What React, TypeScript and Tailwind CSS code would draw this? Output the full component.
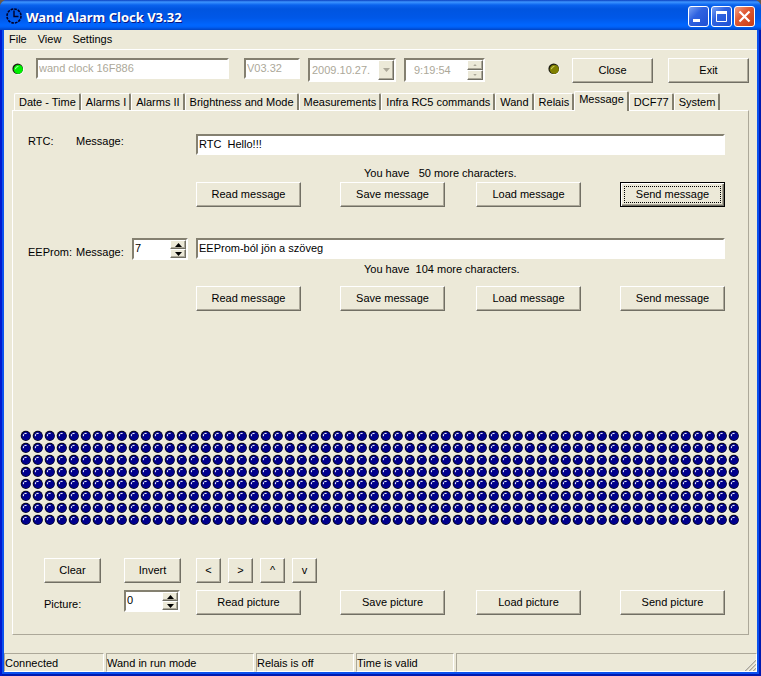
import { useState } from "react";
import clsx from "clsx";

const COLS = 60;
const ROWS = 8;

const TABS = [
  "Date - Time",
  "Alarms I",
  "Alarms II",
  "Brightness and Mode",
  "Measurements",
  "Infra RC5 commands",
  "Wand",
  "Relais",
  "Message",
  "DCF77",
  "System",
];

const SUNKEN =
  "border-2 border-t-[#848070] border-l-[#848070] border-r-white border-b-white bg-white";
const RAISED =
  "border border-t-white border-l-white border-r-[#716f64] border-b-[#716f64] bg-[#ece9d8] shadow-[inset_-1px_-1px_0_#aca899]";

type ButtonProps = {
  children: string;
  className?: string;
  focused?: boolean;
  onClick?: () => void;
};

function Button({ children, className, focused, onClick }: ButtonProps) {
  if (focused) {
    return (
      <button
        type="button"
        onClick={onClick}
        className={clsx(
          "h-[25px] border border-black bg-[#ece9d8] p-[3px] shadow-[inset_1px_1px_0_#fff,inset_-1px_-1px_0_#716f64,inset_-2px_-2px_0_#aca899]",
          className
        )}
      >
        <span className="flex h-full items-center justify-center border border-dotted border-black">
          {children}
        </span>
      </button>
    );
  }
  return (
    <button
      type="button"
      onClick={onClick}
      className={clsx("h-[25px] text-center", RAISED, className)}
    >
      {children}
    </button>
  );
}

function SpinButtons({ disabled, onStep }: { disabled?: boolean; onStep?: (d: number) => void }) {
  return (
    <div className="flex w-4 shrink-0 flex-col">
      {[1, -1].map((dir) => (
        <button
          key={dir}
          type="button"
          disabled={disabled}
          aria-label={dir > 0 ? "Up" : "Down"}
          onClick={() => onStep?.(dir)}
          className={clsx("flex min-h-0 flex-1 items-center justify-center", RAISED)}
        >
          <svg
            viewBox="0 0 7 4"
            className={disabled ? "h-[2px] w-1 fill-[#aca899]" : "h-1 w-[7px] fill-black"}
          >
            <path d={dir > 0 ? "M3.5 0L7 4H0z" : "M0 0h7L3.5 4z"} />
          </svg>
        </button>
      ))}
    </div>
  );
}

function SpinEdit({ label, initial }: { label: string; initial: number }) {
  const [value, setValue] = useState(initial);
  return (
    <div className={clsx("flex h-[22px] w-14", SUNKEN)}>
      <input
        aria-label={label}
        value={value}
        onChange={(e) => setValue(Number(e.target.value) || 0)}
        className="w-0 min-w-0 flex-1 px-px pb-0.5 outline-none"
      />
      <SpinButtons onStep={(d) => setValue((v) => Math.max(0, v + d))} />
    </div>
  );
}

function StatusLed({ color, light }: { color: string; light: string }) {
  return (
    <svg viewBox="0 0 12 12" className="h-3 w-3 shrink-0">
      <circle cx="6.4" cy="6.4" r="5.4" fill="#fff" />
      <circle cx="5.7" cy="5.7" r="5.3" fill="#1c1c10" />
      <circle cx="6.3" cy="6.3" r="4.6" fill={color} />
      <path d="M3.4 6.2Q3.6 3.6 6.4 3.4" stroke={light} strokeWidth="1" fill="none" />
    </svg>
  );
}

function Dot({ on }: { on: boolean }) {
  return (
    <svg viewBox="0 0 12 12" className="h-3 w-3">
      <circle cx="6.4" cy="6.4" r="5.5" fill="#f8f6ee" />
      <circle cx="5.8" cy="5.8" r="5.1" fill="#08081c" />
      <circle cx="6" cy="6" r="4.3" fill={on ? "#3c6cff" : "#00008c"} />
      <path d="M3.4 6.2V4.8L4.8 3.4H6.6" stroke="#fff" strokeWidth="1" fill="none" />
    </svg>
  );
}

function TitleBar() {
  const caption =
    "flex h-[21px] w-[21px] items-center justify-center rounded-[3px] border border-white";
  return (
    <header className="flex h-[30px] items-center rounded-t-[7px] bg-[linear-gradient(#0a3fc0_0px,#3d95ff_2px,#0a63ee_5px,#0055e0_9px,#0058e8_18px,#0066ff_25px,#0061f8_27px,#0044c4_30px)] pt-0.5 pr-1.5 pl-1.5">
      <svg viewBox="0 0 16 16" className="h-4 w-4">
        <circle
          cx="8"
          cy="8"
          r="7"
          fill="none"
          stroke="#000028"
          strokeWidth="1.6"
          strokeDasharray="2.7 0.965"
        />
        <path d="M8 2.5V8.5h4.5" fill="none" stroke="#000028" strokeWidth="1.4" />
      </svg>
      <h1 className="ml-1 flex-1 pt-0.5 font-['Noto_Sans','Open_Sans',sans-serif] text-[13px] leading-4 font-bold text-white [text-shadow:1px_1px_0_#0a1883]">
        Wand Alarm Clock V3.32
      </h1>
      <div className="flex gap-0.5">
        <button
          type="button"
          aria-label="Minimize"
          className={clsx(caption, "bg-[linear-gradient(135deg,#7aa2f4,#2f62e0_40%,#1e4fd4)]")}
        >
          <svg viewBox="0 0 19 19" className="h-[19px] w-[19px]">
            <path d="M4 12h7v3H4z" fill="#fff" />
          </svg>
        </button>
        <button
          type="button"
          aria-label="Maximize"
          className={clsx(caption, "bg-[linear-gradient(135deg,#7aa2f4,#2f62e0_40%,#1e4fd4)]")}
        >
          <svg viewBox="0 0 19 19" className="h-[19px] w-[19px]">
            <path d="M4.5 5v9.5h10V5" fill="none" stroke="#fff" />
            <path d="M4 4h11v3H4z" fill="#fff" />
          </svg>
        </button>
        <button
          type="button"
          aria-label="Close window"
          className={clsx(caption, "bg-[linear-gradient(135deg,#f0a088,#e05a34_40%,#c83c14)]")}
        >
          <svg viewBox="0 0 19 19" className="h-[19px] w-[19px]">
            <path d="M4.5 4.5l10 10M14.5 4.5l-10 10" stroke="#fff" strokeWidth="2.2" />
          </svg>
        </button>
      </div>
    </header>
  );
}

function DeviceBar() {
  const field = "h-[21px] px-px pb-0.5 text-[#aca899] disabled:opacity-100";
  return (
    <div className="flex items-start px-2 pt-2">
      <div className="flex h-[22px] w-6 items-center">
        <StatusLed color="#00f000" light="#b8ffb8" />
      </div>
      <div className="flex flex-1">
        <input
          aria-label="Device"
          disabled
          defaultValue="wand clock 16F886"
          className={clsx("mr-[15px] w-[193px]", field, SUNKEN)}
        />
        <input
          aria-label="Version"
          disabled
          defaultValue="V03.32"
          className={clsx("mr-2 w-14", field, SUNKEN)}
        />
        <div className={clsx("relative mr-2 h-6 w-[88px]", SUNKEN)}>
          <select
            aria-label="Date"
            disabled
            className="h-full w-full appearance-none px-0.5 text-[#aca899] disabled:opacity-100"
          >
            <option>2009.10.27.</option>
          </select>
          <span
            className={clsx(
              "pointer-events-none absolute inset-y-0 right-0 flex w-4 items-center justify-center",
              RAISED
            )}
          >
            <svg viewBox="0 0 7 4" className="h-1 w-[7px] fill-[#aca899]">
              <path d="M0 0h7L3.5 4z" />
            </svg>
          </span>
        </div>
        <div className={clsx("flex h-6 w-[81px]", SUNKEN)}>
          <input
            aria-label="Time"
            disabled
            defaultValue="9:19:54"
            className="w-0 min-w-0 flex-1 pl-2 text-[#aca899]"
          />
          <SpinButtons disabled />
        </div>
      </div>
      <div className="flex h-[22px] w-6 items-center">
        <StatusLed color="#808000" light="#d8d870" />
      </div>
      <div className="flex gap-[15px]">
        <Button className="w-[81px]">Close</Button>
        <Button className="w-[81px]">Exit</Button>
      </div>
    </div>
  );
}

function ActionRow({ noun, focusSend }: { noun: string; focusSend?: boolean }) {
  return (
    <div className="grid flex-1 grid-cols-[144fr_136fr_144fr_105px]">
      <Button className="w-[105px]">{`Read ${noun}`}</Button>
      <Button className="w-[105px]">{`Save ${noun}`}</Button>
      <Button className="w-[105px]">{`Load ${noun}`}</Button>
      <Button className="w-[105px]" focused={focusSend}>
        {`Send ${noun}`}
      </Button>
    </div>
  );
}

function MessagePage() {
  const [dots, setDots] = useState<boolean[]>(() => Array(COLS * ROWS).fill(false));

  // moves the whole picture, wrapping round at the edges
  const shift = (dx: number, dy: number) =>
    setDots((d) =>
      d.map((_, i) => {
        const x = ((i % COLS) - dx + COLS) % COLS;
        const y = (Math.floor(i / COLS) - dy + ROWS) % ROWS;
        return d[y * COLS + x];
      })
    );

  const edit = clsx("h-[21px] min-w-0 flex-1 px-px pb-0.5 whitespace-pre outline-none", SUNKEN);

  return (
    <section className="flex-1 border border-t-white border-l-white border-r-[#aca899] border-b-[#aca899] pt-[23px] pb-[17px]">
      <div className="pr-[23px] pl-[15px]">
        <div className="flex">
          <span className="w-12 pt-px">RTC:</span>
          <label htmlFor="rtc" className="w-[120px] pt-px">
            Message:
          </label>
          <input id="rtc" defaultValue="RTC  Hello!!!" className={edit} />
        </div>
        <p className="mt-3 pl-[336px] whitespace-pre">You have   50 more characters.</p>
        <div className="mt-0.5 flex pl-[168px]">
          <ActionRow noun="message" focusSend />
        </div>

        <div className="mt-[31px] flex">
          <span className="w-12 pt-2">EEProm:</span>
          <label htmlFor="eeprom" className="w-14 pt-2">
            Message:
          </label>
          <div className="mr-2">
            <SpinEdit label="Message number" initial={7} />
          </div>
          <input id="eeprom" defaultValue="EEProm-ból jön a szöveg" className={edit} />
        </div>
        <p className="mt-[3px] pl-[336px] whitespace-pre">You have  104 more characters.</p>
        <div className="mt-[10px] flex pl-[168px]">
          <ActionRow noun="message" />
        </div>
      </div>

      <div className="mt-[119px] grid grid-cols-[repeat(60,1fr)] pr-2 pl-[7px]">
        {dots.map((on, i) => (
          <button
            key={i}
            type="button"
            aria-label={`Dot ${i + 1}`}
            className="h-3"
            onClick={() => setDots((d) => d.map((v, j) => (j === i ? !v : v)))}
          >
            <Dot on={on} />
          </button>
        ))}
      </div>

      <div className="mt-8 pr-[23px] pl-[31px]">
        <div className="flex">
          <Button className="mr-[23px] w-[57px]" onClick={() => setDots((d) => d.map(() => false))}>
            Clear
          </Button>
          <Button className="mr-[15px] w-[57px]" onClick={() => setDots((d) => d.map((v) => !v))}>
            Invert
          </Button>
          <div className="flex gap-[7px]">
            <Button className="w-[25px]" onClick={() => shift(-1, 0)}>{"<"}</Button>
            <Button className="w-[25px]" onClick={() => shift(1, 0)}>{">"}</Button>
            <Button className="w-[25px]" onClick={() => shift(0, -1)}>^</Button>
            <Button className="w-[25px]" onClick={() => shift(0, 1)}>v</Button>
          </div>
        </div>
        <div className="mt-[7px] flex">
          <span className="w-20 pt-2">Picture:</span>
          <div className="mr-4">
            <SpinEdit label="Picture number" initial={0} />
          </div>
          <ActionRow noun="picture" />
        </div>
      </div>
    </section>
  );
}

function StatusBar() {
  const pane =
    "h-[19px] border border-t-[#aca899] border-l-[#aca899] border-r-white border-b-white leading-[18px]";
  return (
    <footer className="flex gap-0.5">
      <div className={clsx(pane, "w-[100px]")}>Connected</div>
      <div className={clsx(pane, "w-[148px]")}>Wand in run mode</div>
      <div className={clsx(pane, "w-[98px]")}>Relais is off</div>
      <div className={clsx(pane, "w-[98px]")}>Time is valid</div>
      <div className={clsx(pane, "flex flex-1 items-end justify-end")}>
        <svg viewBox="0 0 12 12" className="h-3 w-3">
          <path d="M1 12L12 1M5 12l7-7M9 12l3-3" stroke="#aca899" strokeWidth="1.5" />
          <path d="M0 12L12 0M4 12l8-8M8 12l4-4" stroke="#fff" strokeWidth="0.6" />
        </svg>
      </div>
    </footer>
  );
}

export default function App() {
  const [tab, setTab] = useState("Message");

  return (
    <div className="bg-[#6b5a48] font-['Liberation_Sans',Arial,sans-serif] text-[11px] leading-[13px] text-black">
      <div className="flex min-h-screen flex-col rounded-t-[7px] bg-[#0a50ee]">
        <TitleBar />
        <div className="flex flex-1 flex-col px-1 pb-1 shadow-[inset_2px_0_0_#0019cf,inset_-2px_-2px_0_#0019b0]">
          <main className="flex flex-1 flex-col bg-[#ece9d8]">
            <nav className="flex h-5 items-center gap-[11px] border-b border-white pl-[5px]">
              <button type="button">File</button>
              <button type="button">View</button>
              <button type="button">Settings</button>
            </nav>
            <DeviceBar />
            <div className="flex flex-1 flex-col px-2 pt-2 pb-[18px]">
              <div role="tablist" className="flex items-end pl-0.5">
                {TABS.map((name) => (
                  <button
                    key={name}
                    type="button"
                    role="tab"
                    aria-selected={tab === name}
                    onClick={() => setTab(name)}
                    className={clsx(
                      "rounded-t-[2px] border-t border-r-2 border-l border-t-white border-r-[#848070] border-l-white pr-[3px] pl-1 whitespace-nowrap",
                      tab === name ? "relative -mb-px h-5 bg-[#ece9d8] pb-1" : "h-[17px]"
                    )}
                  >
                    {name}
                  </button>
                ))}
              </div>
              <MessagePage />
            </div>
            <StatusBar />
          </main>
        </div>
      </div>
    </div>
  );
}
